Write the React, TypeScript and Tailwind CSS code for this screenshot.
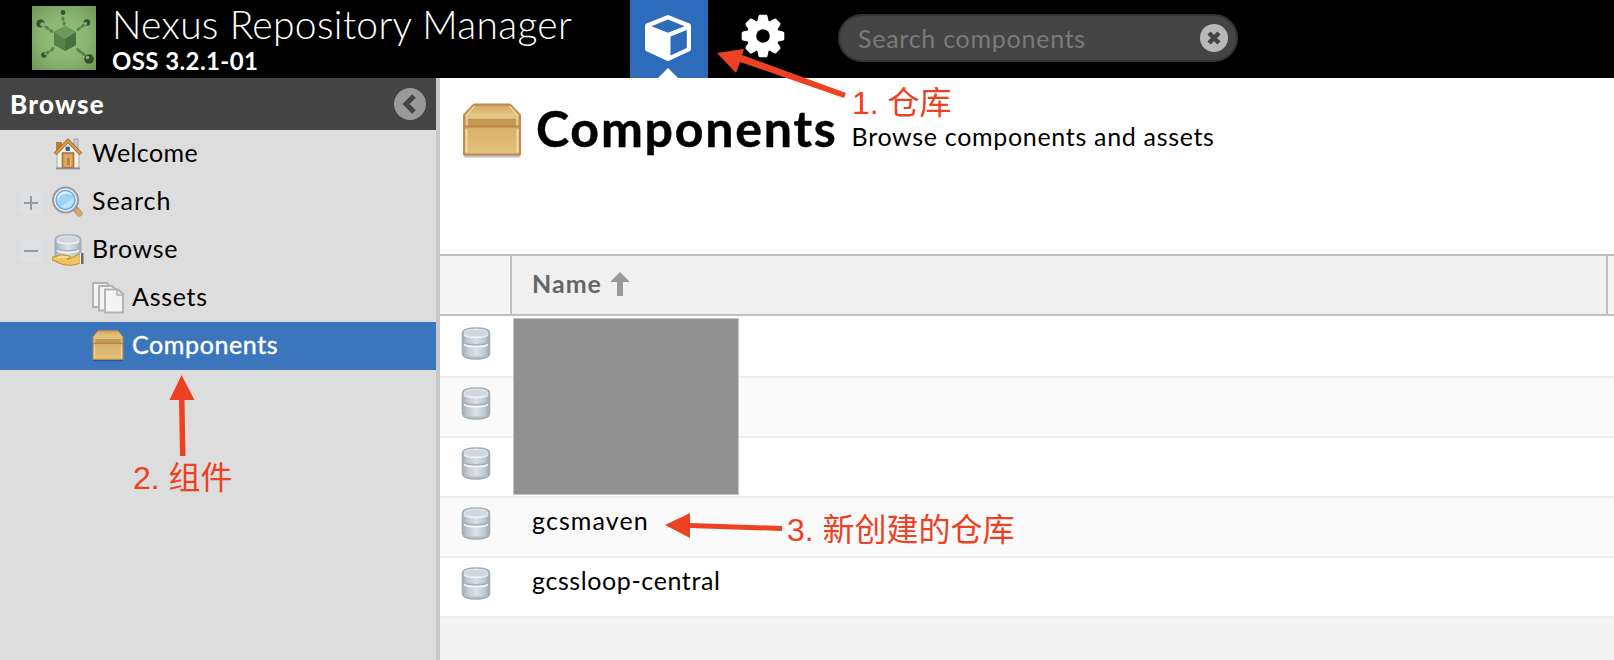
import React from 'react';

type P = { className?: string };

const Box = ({ className = '' }: P) => (
  <svg viewBox="0 0 60 56" preserveAspectRatio="none" className={className}>
    <defs>
      <linearGradient id="boxTop" x1="0" y1="0" x2="0" y2="1"><stop offset="0" stopColor="#d3ab62" /><stop offset="1" stopColor="#e8cc89" /></linearGradient>
      <linearGradient id="boxFront" x1="0" y1="0" x2="0" y2="1"><stop offset="0" stopColor="#cba25a" /><stop offset="1" stopColor="#e6c17d" /></linearGradient>
    </defs>
    <rect x="2" y="50" width="56" height="4.5" rx="1" fill="#000" opacity=".25" />
    <path d="M2 12 12 1.500H48L58 12V51.500H2Z" fill="url(#boxFront)" stroke="#bd8c54" strokeWidth="2" strokeLinejoin="round" />
    <path d="M4 13 13 3H47L56 13Z" fill="url(#boxTop)" />
    <path d="M3.500 13 12.500 3M56.500 13 47.500 3" stroke="#efdbae" strokeWidth="1.200" />
    <rect x="4" y="15" width="52" height="8" fill="#c39a51" />
    <path d="M5 23V14.500H55V23" fill="none" stroke="#e8cf98" strokeWidth="1.800" />
    <rect x="2" y="22.500" width="56" height="2" fill="#b98447" />
    <path d="M4.500 26V49M55.500 26V49" stroke="#f0dcae" strokeWidth="1.800" />
  </svg>
);

const Db = ({ className = '' }: P) => (
  <svg viewBox="0 0 30 33" className={className}>
    <defs><linearGradient id="dbBody"><stop offset="0" stopColor="#a3adb5" /><stop offset=".18" stopColor="#c0c8d1" /><stop offset=".5" stopColor="#dce1ea" /><stop offset=".82" stopColor="#bfc8d0" /><stop offset="1" stopColor="#9fa9b1" /></linearGradient></defs>
    <path d="M1.500 6C1.500 2.500 8 1 15 1S28.500 2.500 28.500 6V26C28.500 30.500 22 32 15 32S1.500 30.500 1.500 26Z" fill="url(#dbBody)" stroke="#a3adb5" strokeWidth="1.600" />
    <ellipse cx="15" cy="6" rx="12" ry="3.800" fill="#d0d7df" stroke="#e9edf2" />
    <path d="M3 8C5 11.500 25 11.500 27 8" fill="none" stroke="#f0f3f6" strokeWidth="1.400" />
    <path d="M2 15.500C6 18.500 24 18.500 28 15.500" fill="none" stroke="#a4afb9" strokeWidth="1.600" />
    <path d="M3 17.500C7 20.500 23 20.500 27 17.500" fill="none" stroke="#f4f6f8" strokeWidth="1.600" />
    <path d="M3 28C7 31 23 31 27 28" fill="none" stroke="#b3bcc4" strokeWidth="1.400" />
  </svg>
);

const Home = () => (
  <svg viewBox="0 0 32 32" className="size-8">
    <path d="M22 1h4v10h-4z" fill="#c9cbd0" stroke="#9da0a8" />
    <path d="M4 4h6v8H4z" fill="#b87a35" />
    <path d="M5 14 16 4 27 14V30H5Z" fill="#f0efe2" stroke="#aeb0aa" />
    <path d="M3 16 16 3 29 16" fill="none" stroke="#a8691f" strokeWidth="3.800" />
    <path d="M3.500 15.500 16 3 28.500 15.500" fill="none" stroke="#d99b4c" strokeWidth="2" />
    <rect x="13.500" y="8.500" width="4.500" height="4.500" rx="1.500" fill="#2b5fb8" />
    <rect x="10.500" y="15" width="11" height="14.500" fill="#d8a565" stroke="#ad6f32" strokeWidth="1.500" />
    <rect x="14" y="19" width="4.500" height="9" fill="#c8842e" stroke="#e8bc72" />
    <path d="M4 30.500H28" stroke="#8e9192" strokeWidth="1.800" />
  </svg>
);

const Magnifier = () => (
  <svg viewBox="0 0 32 32" className="size-8">
    <path d="M22 21 27.500 27.500" stroke="#98999b" strokeWidth="6" strokeLinecap="round" />
    <path d="M25.500 25 27.500 27.500" stroke="#e3ab55" strokeWidth="4.500" strokeLinecap="round" />
    <circle cx="13.500" cy="14" r="12.500" fill="#f2f3f3" stroke="#9a9c9f" strokeWidth="2.200" />
    <circle cx="13.500" cy="14" r="9.500" fill="#9fd3f8" stroke="#6ea9db" strokeWidth="1.400" />
    <path d="M5.500 15C7.500 9 12.500 6 20.500 9 18.500 5 8.500 3 5.500 11Z" fill="#d8effd" />
    <path d="M9 21 21 12C22 20 15 24 9 21Z" fill="#b9e8ff" />
  </svg>
);

const BrowseIcon = () => (
  <div className="relative size-8">
    <Db className="h-[31px] w-8" />
    <svg viewBox="0 0 32 14" className="absolute bottom-0 left-0 h-[14px] w-8">
      <path d="M0 5C6 5 7 2 12 3L18 4C20 5 18 7 15 7 20 7 23 3 28 2V11C20 15 9 13 6 10L0 8Z" fill="#efc45f" stroke="#c28c35" />
      <path d="M5 6C9 4 12 5 16 5" stroke="#fbe6a3" strokeWidth="1.400" fill="none" />
      <path d="M29 1H31.500V12H29Z" fill="#666a70" /><path d="M28.300 1V12" stroke="#fff" />
    </svg>
  </div>
);

const Pages = () => (
  <svg viewBox="0 0 32 32" className="size-8">
    <g fill="#f4f4f4" stroke="#b1b4b3" strokeWidth="2">
      <path d="M1 1H15L18 5V25H1Z" /><path d="M7 4H20L24 8V28.500H7Z" /><path d="M13 7.500H26L31 12V30.500H13Z" />
    </g>
    <path d="M25 8V13H30" fill="#e3e5e4" stroke="#b1b4b3" strokeWidth="1.500" />
  </svg>
);

const Logo = () => (
  <svg viewBox="0 0 64 64" className="size-16">
    <defs><radialGradient id="logoBg" r=".7"><stop offset="0" stopColor="#94c47c" /><stop offset=".5" stopColor="#8ab672" /><stop offset="1" stopColor="#6f9658" /></radialGradient></defs>
    <rect width="64" height="64" fill="url(#logoBg)" />
    <g stroke="#567a46" strokeWidth="3" strokeLinecap="round" opacity=".85"><path d="M31 12V13.500M32 17V18M14 21 16 22.500M18.500 24.500 20 25.500M46 23.500 47.500 22.500M50 20.500 51.500 19M19.500 44 21 42.500M15 47 16.500 46M45.500 43.500 48 45.500M49.500 46.500 52 48.500" /></g>
    <path d="M33 20 44 26V39L33 45 22 39V26Z" fill="#57834a" /><path d="M33 20 44 26 33 33 22 26Z" fill="#6a9a55" /><path d="M33 33 44 26V39L33 45Z" fill="#47703a" />
    <g fill="#38502f"><circle cx="31" cy="6.500" r="2.400" /><circle cx="8.500" cy="17.500" r="4" /><circle cx="55" cy="16.500" r="3.200" /><circle cx="12" cy="49" r="2.800" /><circle cx="57" cy="53" r="4.800" /></g>
    <g fill="#8aae76"><circle cx="10.500" cy="18.500" r="2.200" /><circle cx="53.500" cy="17.500" r="1.600" /><circle cx="13.500" cy="48" r="1.200" /><circle cx="55.500" cy="51.500" r="1.800" /></g>
  </svg>
);

const Cube = () => (
  <svg viewBox="0 0 46 46" className="mb-0.5 mr-[3px] h-[46px] w-[46px]">
    <path fill="#fff" fillRule="evenodd" d="M21.500.500Q23-.3 24.500.500L44.500 8.500Q46 9.200 46 11V34Q46 35.500 44.500 36.200L24.500 45.500Q23 46.300 21.500 45.500L1.500 36.200Q0 35.500 0 34V11Q0 9.200 1.500 8.500ZM23 4.500 6.500 11.200 23 17.800 39.500 11.200ZM25.500 21.500V40.500L41.800 33V15Z" />
  </svg>
);

const Gear = () => (
  <svg viewBox="-22 -22 44 44" className="size-11">
    <g fill="#fff">
      <circle r="16" />
      {[0, 45, 90, 135, 180, 225, 270, 315].map((a) => <path key={a} transform={`rotate(${a})`} d="M-6-13-4.500-20Q-4-21.300-3-21.300H3Q4-21.300 4.500-20L6-13Z" />)}
    </g>
    <circle r="6.800" fill="#000" />
  </svg>
);

const Toggle = ({ open }: { open: boolean }) => (
  <svg viewBox="0 0 22 22" className="size-[22px]">
    <rect width="22" height="22" fill="#dee2e5" />
    <path d={open ? 'M4 11H18' : 'M4 11H18M11 4V18'} stroke="#999" strokeWidth="2" />
  </svg>
);

const TreeRow = ({ label, icon, tracking, depth = 0, open, selected }: { label: string; icon: React.ReactNode; tracking: string; depth?: number; open?: boolean; selected?: boolean }) => (
  <div className={`flex h-12 items-center ${selected ? 'bg-[#3b76bd] text-white' : ''}`}>
    <div className={`flex shrink-0 ${depth ? 'w-[92px]' : 'w-[52px]'} pl-5 pt-0.5`}>{open !== undefined && <Toggle open={open} />}</div>
    {icon}
    <span className={`mb-[3px] ml-2 text-[25px] leading-none ${tracking} ${selected ? '[-webkit-text-stroke:0.4px_#fff]' : ''}`}>{label}</span>
  </div>
);

const rows = [
  { name: '', tracking: '' },
  { name: '', tracking: '' },
  { name: '', tracking: '' },
  { name: 'gcsmaven', tracking: 'tracking-[1.1px]' },
  { name: 'gcssloop-central', tracking: 'tracking-[0.6px]' },
];

export default function App() {
  return (
    <div className="relative flex h-[660px] w-[1614px] flex-col overflow-hidden bg-white font-['Lato','Noto_Sans_CJK_SC',sans-serif] text-black">
      <header className="flex h-[78px] shrink-0 bg-black text-white">
        <div className="flex w-[598px] shrink-0 pl-8 pt-1.5">
          <Logo />
          <div className="-mt-px ml-4 whitespace-nowrap">
            <div className="text-[39px] font-light leading-[38px] tracking-[0.3px]">Nexus Repository Manager</div>
            <div className="pt-px text-[24px] font-bold leading-[34px] tracking-[0.4px]">OSS 3.2.1-01</div>
          </div>
        </div>
        <div className="relative ml-8 flex w-[78px] shrink-0 items-center justify-center bg-[#2d6bbb]">
          <Cube />
          <svg viewBox="0 0 20 10" className="absolute bottom-0 left-[28px] h-2.5 w-5"><path d="M0 10 10 0 20 10Z" fill="#fff" /></svg>
        </div>
        <div className="ml-[33px] mt-3.5"><Gear /></div>
        <div className="ml-[53px] mt-3.5 flex h-12 w-[400px] items-center justify-between rounded-full border-2 border-[#333] bg-[#444] pl-[18px] pr-2 text-[25px] tracking-[0.74px] text-[#7a7a7a]">
          <span className="mt-0.5">Search components</span>
          <svg viewBox="0 0 28 28" className="size-7"><circle cx="14" cy="14" r="14" fill="#b8b8b8" /><path d="M9 9 19 19M19 9 9 19" stroke="#444" strokeWidth="4.500" /></svg>
        </div>
      </header>
      <div className="flex min-h-0 flex-1">
        <aside className="w-[440px] shrink-0 border-r-4 border-[#c8c8c8] bg-[#ddd]">
          <div className="flex h-[52px] items-center justify-between bg-[#444] pl-2.5 pr-2.5 text-[26px] font-black tracking-[1.2px] text-white">
            <span>Browse</span>
            <svg viewBox="0 0 32 32" className="size-8"><circle cx="16" cy="16" r="16" fill="#999" /><path d="M20 8 12 16 20 24" fill="none" stroke="#444" strokeWidth="5" /></svg>
          </div>
          <TreeRow label="Welcome" tracking="tracking-[0.4px]" icon={<Home />} />
          <TreeRow label="Search" tracking="tracking-[0.95px]" icon={<Magnifier />} open={false} />
          <TreeRow label="Browse" tracking="tracking-[0.7px]" icon={<BrowseIcon />} open />
          <TreeRow label="Assets" tracking="tracking-[0.7px]" icon={<Pages />} depth={1} />
          <TreeRow label="Components" tracking="tracking-[0.62px]" icon={<Box className="size-8" />} depth={1} selected />
        </aside>
        <main className="flex min-w-0 flex-1 flex-col bg-[#f3f3f3]">
          <div className="flex h-[176px] shrink-0 bg-white pl-[22px]">
            <Box className="mt-[25px] h-[56px] w-[60px]" />
            <div className="ml-3.5 flex h-[100px] items-baseline whitespace-nowrap pt-5">
              <h1 className="text-[50px] font-bold leading-[60px] tracking-[1.8px] [-webkit-text-stroke:0.5px_#000]">Components</h1>
              <span className="relative -top-px ml-3.5 text-[25px] tracking-[0.68px]">Browse components and assets</span>
            </div>
          </div>
          <div className="flex h-[62px] shrink-0 border-y-2 border-[#c0c0c0] bg-[#f0f0f0]">
            <div className="w-[72px] border-r-2 border-[#c0c0c0] bg-[#f5f5f5]" />
            <div className="flex w-[1096px] items-center border-r-2 border-[#c0c0c0] pl-5 text-[25px] font-bold tracking-[1px] text-[#666]">
              <span className="mb-[3px]">Name</span>
              <svg viewBox="0 0 20 24" className="mb-0.5 ml-2 h-6 w-5"><path d="M10 0 20 10H13V24H7V10H0Z" fill="#999" /></svg>
            </div>
            <div className="flex-1 bg-[#f5f5f5]" />
          </div>
          <div className="shrink-0 bg-white pt-0.5">
            {rows.map(({ name, tracking }, i) => (
              <div key={i} className={`flex h-[60px] border-b-2 border-[#ededed] pl-[21px] ${i % 2 ? 'bg-[#fafafa]' : 'bg-white'}`}>
                <Db className="mt-[9px] h-[33px] w-[30px]" />
                <span className={`ml-[41px] mt-1.5 text-[25px] leading-8 ${tracking}`}>{name}</span>
              </div>
            ))}
          </div>
        </main>
      </div>
      <div className="absolute left-[513px] top-[318px] h-[177px] w-[226px] border border-[#c4c4c4] bg-[#919191]" />
      <svg viewBox="0 0 1614 660" className="pointer-events-none absolute inset-0 h-[660px] w-[1614px] fill-[#ee4023]">
        <path d="M717 53 744 49 742 55 846 93 844 98 740 62 736 73Z" />
        <path d="M181.500 375 194.500 400H184.500L185.500 456H180L179 400H169.500Z" />
        <path d="M665 525 690 513V523L782 526V531L690 528V538Z" />
      </svg>
      <div className="absolute left-[852px] top-[82px] whitespace-nowrap font-['Liberation_Sans','Noto_Sans_CJK_SC',sans-serif] text-[32px] leading-[42px] text-[#ee4023]">1. 仓库</div>
      <div className="absolute left-[133px] top-[457px] whitespace-nowrap font-['Liberation_Sans','Noto_Sans_CJK_SC',sans-serif] text-[32px] leading-[42px] text-[#ee4023]">2. 组件</div>
      <div className="absolute left-[787px] top-[509px] whitespace-nowrap font-['Liberation_Sans','Noto_Sans_CJK_SC',sans-serif] text-[32px] leading-[42px] text-[#ee4023]">3. 新创建的仓库</div>
    </div>
  );
}
